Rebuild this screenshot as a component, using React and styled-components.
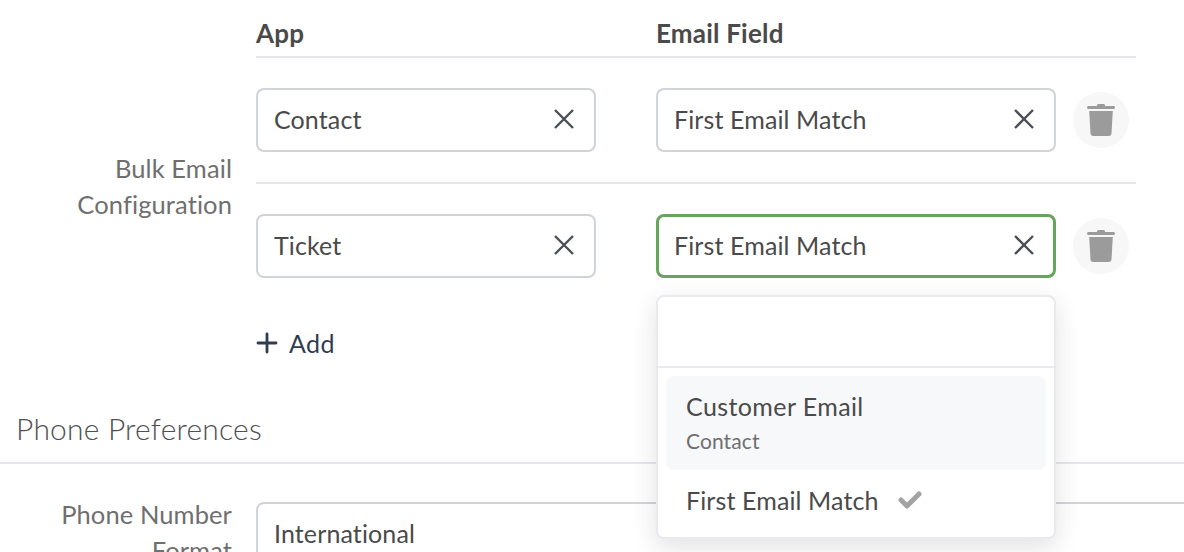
import React from 'react';
import styled, { createGlobalStyle } from 'styled-components';

const GlobalStyle = createGlobalStyle`
  html, body {
    margin: 0;
    height: 552px;
    overflow: hidden;
    background: #fff;
    font-family: Lato, "Noto Sans", sans-serif;
  }
`;

const FormRow = styled.div`
  display: grid;
  grid-template-columns: 232px 1fr;
  column-gap: 24px;
  align-items: ${props => props.$align || 'center'};
`;

const Label = styled.label`
  padding-bottom: 2px;
  font-size: 25.5px;
  line-height: 36px;
  letter-spacing: 0.1px;
  color: #6f6f6f;
  text-align: right;
`;

const PhoneLabel = styled(Label)`
  margin-top: -6px;
`;

const Table = styled.div`
  width: 880px;
  height: 374px;
`;

const HeaderRow = styled.div`
  display: grid;
  grid-template-columns: 400px 1fr;
  height: 58px;
  box-sizing: border-box;
  padding-top: 18px;
  border-bottom: 2px solid #e6e6ea;
`;

const HeaderCell = styled.div`
  font-size: 26px;
  line-height: 30px;
  letter-spacing: 0.2px;
  font-weight: 700;
  color: #4a4a4a;
`;

const Row = styled.div`
  display: flex;
  align-items: center;
  padding: 30px 0;
  border-bottom: ${props => (props.$last ? 'none' : '2px solid #e6e6ea')};
`;

const Cell = styled.div`
  position: relative;
  width: ${props => props.$width}px;
  margin-right: ${props => props.$gap || 0}px;
`;

const SelectBox = styled.div`
  display: flex;
  align-items: center;
  justify-content: space-between;
  height: 64px;
  box-sizing: border-box;
  padding: 0 ${props => (props.$focused ? 18 : 19)}px 2px ${props => (props.$focused ? 15 : 16)}px;
  background: #fff;
  border: ${props => (props.$focused ? '3px solid #66a65c' : '2px solid #cfd4da')};
  border-radius: 8px;
  font-size: 25px;
  letter-spacing: 0.12px;
  color: #4a4a4a;
`;

const Clear = styled.span`
  display: flex;
  color: #4a4f57;
`;

const TrashButton = styled.button`
  display: flex;
  align-items: center;
  justify-content: center;
  width: 56px;
  height: 56px;
  margin-left: 17px;
  padding: 0;
  border: none;
  border-radius: 50%;
  background: #f7f7f7;
`;

const AddButton = styled.div`
  display: flex;
  align-items: center;
  gap: 11px;
  margin-top: 17px;
  font-size: 25px;
  line-height: 36px;
  letter-spacing: 0.4px;
  color: #2f3b52;
`;

const SectionTitle = styled.h2`
  margin: 34px 0 0;
  padding: 0 0 14px 16px;
  border-bottom: 2px solid #e6e6ea;
  font-size: 30px;
  line-height: 40px;
  letter-spacing: 0.2px;
  font-weight: 300;
  color: #4f4f4f;
`;

const PhoneRow = styled(FormRow)`
  margin-top: 38px;
`;

const PhoneInput = styled(SelectBox)`
  width: 1000px;
`;

const Dropdown = styled.div`
  position: absolute;
  top: 81px;
  left: 0;
  right: 0;
  z-index: 2;
  height: 244px;
  box-sizing: border-box;
  background: #fff;
  border: 2px solid #e9e9ee;
  border-radius: 8px;
  box-shadow: 0 8px 24px rgba(40, 45, 60, 0.14);
`;

const SearchArea = styled.div`
  height: 69px;
  border-bottom: 2px solid #e9e9ee;
`;

const Options = styled.div`
  padding: 8px;
`;

const Option = styled.div`
  padding: ${props => (props.$sub ? '13px 20px 14px' : '13px 20px')};
  border-radius: 8px;
  background: ${props => (props.$active ? '#f7f8fa' : 'transparent')};
`;

const OptionTitle = styled.div`
  display: flex;
  align-items: center;
  gap: 19px;
  font-size: 25px;
  line-height: 34px;
  letter-spacing: ${props => props.$spacing || 0.12}px;
  color: #4a4a4a;
`;

const OptionSub = styled.div`
  margin-top: 3px;
  font-size: 21px;
  line-height: 30px;
  letter-spacing: 0.1px;
  color: #6f6f6f;
`;

const CloseIcon = () => (
  <svg width="22" height="22" viewBox="0 0 22 22" fill="none" stroke="currentColor" strokeWidth="2.4">
    <path d="M2 2l18 18M20 2L2 20" />
  </svg>
);

const TrashIcon = () => (
  <svg width="28" height="32" viewBox="0 0 28 32" fill="#9b9b9b">
    <path d="M10 1.5c0-.8.7-1.5 1.5-1.5h5c.8 0 1.5.7 1.5 1.5V2h8.5c.8 0 1.5.7 1.5 1.5S27.300 5 26.500 5h-25C.7 5 0 4.300 0 3.500S.7 2 1.500 2H10z" />
    <path d="M2.200 7h23.600l-1.300 22.500c-.1 1.400-1.200 2.500-2.600 2.500H6.100c-1.400 0-2.500-1.100-2.600-2.500z" />
  </svg>
);

const PlusIcon = () => (
  <svg width="22" height="22" viewBox="0 0 22 22" fill="none" stroke="currentColor" strokeWidth="2.800" strokeLinecap="round">
    <path d="M11 2v18M2 11h18" />
  </svg>
);

const CheckIcon = () => (
  <svg width="24" height="18" viewBox="0 0 24 18" fill="none" stroke="#a3a3a3" strokeWidth="5" strokeLinecap="round" strokeLinejoin="round">
    <path d="M3 9l6 6L21 3" />
  </svg>
);

const Select = ({ value, focused }) => (
  <SelectBox $focused={focused}>
    {value}
    <Clear><CloseIcon /></Clear>
  </SelectBox>
);

const Trash = () => (
  <TrashButton aria-label="Delete"><TrashIcon /></TrashButton>
);

const App = () => (
  <>
    <GlobalStyle />
    <FormRow>
      <Label>Bulk Email<br />Configuration</Label>
      <Table>
        <HeaderRow>
          <HeaderCell>App</HeaderCell>
          <HeaderCell>Email Field</HeaderCell>
        </HeaderRow>
        <Row>
          <Cell $width={340} $gap={60}><Select value="Contact" /></Cell>
          <Cell $width={400}><Select value="First Email Match" /></Cell>
          <Trash />
        </Row>
        <Row $last>
          <Cell $width={340} $gap={60}><Select value="Ticket" /></Cell>
          <Cell $width={400}>
            <Select value="First Email Match" focused />
            <Dropdown>
              <SearchArea />
              <Options>
                <Option $active $sub>
                  <OptionTitle $spacing={0.4}>Customer Email</OptionTitle>
                  <OptionSub>Contact</OptionSub>
                </Option>
                <Option>
                  <OptionTitle>First Email Match <CheckIcon /></OptionTitle>
                </Option>
              </Options>
            </Dropdown>
          </Cell>
          <Trash />
        </Row>
        <AddButton><PlusIcon /> Add</AddButton>
      </Table>
    </FormRow>
    <SectionTitle>Phone Preferences</SectionTitle>
    <PhoneRow $align="start">
      <PhoneLabel>Phone Number<br />Format</PhoneLabel>
      <PhoneInput>International</PhoneInput>
    </PhoneRow>
  </>
);

export default App;
